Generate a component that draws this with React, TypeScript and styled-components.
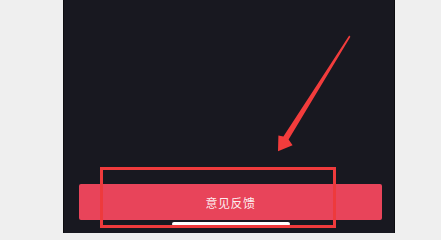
import styled, { createGlobalStyle } from 'styled-components';

const GlobalStyle = createGlobalStyle`
  html, body {
    margin: 0;
    padding: 0;
    background: #efefef;
  }
  body {
    font-family: "Noto Sans CJK SC", "Noto Sans", sans-serif;
  }
`;

const Page = styled.div`
  display: flex;
  height: 233px;
  overflow: hidden;
`;

const Phone = styled.div`
  position: relative;
  box-sizing: border-box;
  margin-left: 63px;
  width: 332px;
  height: 233px;
  background: #181820;
  border-left: 1px solid #0c0c10;
  border-right: 1px solid #0c0c10;
  display: flex;
  flex-direction: column;
  justify-content: flex-end;
  padding: 0 12px 7px 15px;
`;

const FeedbackButton = styled.button`
  width: 303px;
  height: 36px;
  border: none;
  border-radius: 2px;
  background: #e8445a;
  color: rgba(255, 255, 255, 0.92);
  font-family: "Noto Sans CJK SC", "Noto Sans", sans-serif;
  font-size: 12px;
  letter-spacing: 0.5px;
  padding: 0;
  cursor: pointer;
`;

const HomeIndicator = styled.div`
  align-self: center;
  width: 118px;
  height: 4px;
  margin-top: 2px;
  border-radius: 2px;
  background: #ffffff;
`;

const Highlight = styled.div`
  position: absolute;
  left: 36px;
  top: 167px;
  width: 236px;
  height: 61px;
  box-sizing: border-box;
  border: 3px solid #ee3a3c;
  pointer-events: none;
`;

const ArrowLayer = styled.svg`
  position: absolute;
  left: -1px;
  top: 0;
  width: 332px;
  height: 233px;
  pointer-events: none;
`;

function App() {
  return (
    <Page>
      <GlobalStyle />
      <Phone>
        <FeedbackButton>意见反馈</FeedbackButton>
        <HomeIndicator />
        <Highlight />
        <ArrowLayer viewBox="63 0 332 233">
          {/* annotation arrow pointing at the button */}
          <polygon
            points="350.4,36.8 288.6,139.6 292.6,145.2 278,151.2 278.4,135.6 283.4,136.4 349.2,35.6"
            fill="#f23c3c"
          />
        </ArrowLayer>
      </Phone>
    </Page>
  );
}

export default App;
